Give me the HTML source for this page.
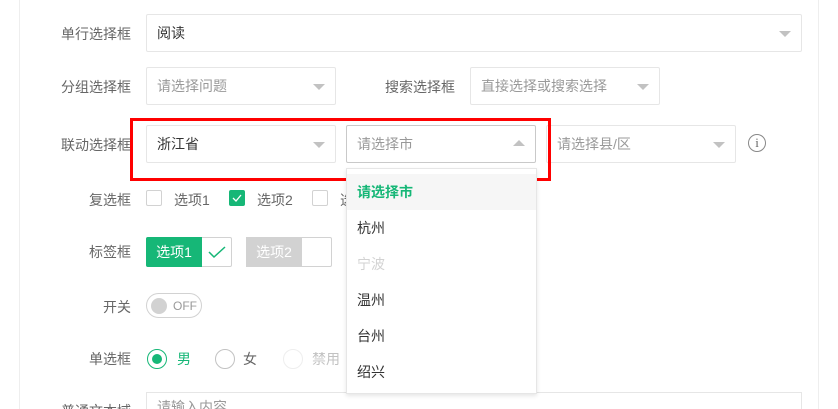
<!DOCTYPE html>
<html style="width:838px;height:409px;overflow:hidden"><head><meta charset="utf-8"><style>
*{box-sizing:border-box;margin:0;padding:0}
body{width:838px;height:409px;overflow:hidden;background:#fff;font-family:"Liberation Sans","Noto Sans CJK SC",sans-serif;font-size:14px;color:#333;position:relative}
.a{position:absolute}
.lbl{position:absolute;text-align:right;color:#666;width:120px;left:11px}
.sel{position:absolute;height:38px;border:1px solid #e6e6e6;border-radius:2px;background:#fff;padding-left:10px;line-height:36px;color:#333}
.ph{color:#999}
.arr{position:absolute;right:10px;top:16px;width:0;height:0;border-left:6px solid transparent;border-right:6px solid transparent;border-top:6px solid #c2c2c2}
.up{border-top:none;border-bottom:6px solid #c2c2c2;top:14px}
.cb{position:absolute;width:16px;height:16px;border:1px solid #d2d2d2;border-radius:2px;background:#fff}
.dd div{height:36px;line-height:36px;padding-left:10px}
</style></head><body>
<div class="a" style="left:19px;top:0;width:1px;height:409px;background:#eee"></div>
<div class="a" style="left:818px;top:0;width:1px;height:409px;background:#eee"></div>

<div class="lbl" style="top:24px">单行选择框</div>
<div class="sel" style="left:146px;top:14px;width:656px">阅读<span class="arr"></span></div>

<div class="lbl" style="top:77px">分组选择框</div>
<div class="sel ph" style="left:146px;top:67px;width:190px">请选择问题<span class="arr"></span></div>
<div class="lbl" style="top:77px;left:335px">搜索选择框</div>
<div class="sel ph" style="left:470px;top:67px;width:190px">直接选择或搜索选择<span class="arr"></span></div>

<div class="lbl" style="top:135px">联动选择框</div>
<div class="sel" style="left:146px;top:125px;width:190px">浙江省<span class="arr"></span></div>
<div class="sel ph" style="left:346px;top:125px;width:190px;border-color:#c9c9c9">请选择市<span class="arr up"></span></div>
<div class="sel ph" style="left:546px;top:125px;width:190px">请选择县/区<span class="arr"></span></div>
<div class="a" style="left:748px;top:134px;width:18px;height:18px;border:1px solid #888;border-radius:50%;text-align:center;line-height:16px;font-size:13px;color:#666;font-family:'Liberation Serif',serif">i</div>
<div class="a" style="left:130px;top:118px;width:421px;height:63px;border:3px solid #f00"></div>

<div class="lbl" style="top:190px">复选框</div>
<div class="cb" style="left:146px;top:190px"></div><div class="a" style="left:174px;top:190px;color:#666">选项1</div>
<div class="cb" style="left:229px;top:190px;background:#16b777;border-color:#16b777"><svg width="14" height="14" style="position:absolute;left:0;top:0"><path d="M3 7l3 3 5-6" stroke="#fff" stroke-width="1.3" fill="none"/></svg></div><div class="a" style="left:257px;top:190px;color:#666">选项2</div>
<div class="cb" style="left:312px;top:190px"></div><div class="a" style="left:340px;top:190px;color:#666">选项3</div>

<div class="lbl" style="top:242px">标签框</div>
<div class="a" style="left:146px;top:237px;width:86px;height:30px;border:1px solid #d2d2d2;border-radius:2px"></div>
<div class="a" style="left:146px;top:237px;width:56px;height:30px;background:#16b777;color:#fff;line-height:30px;text-align:center;border-radius:2px 0 0 2px">选项1</div>
<svg class="a" style="left:207px;top:244px" width="20" height="16"><path d="M2 8l5 5 11-10" stroke="#16b777" stroke-width="1.5" fill="none"/></svg>
<div class="a" style="left:246px;top:237px;width:86px;height:30px;border:1px solid #d2d2d2;border-radius:2px"></div>
<div class="a" style="left:246px;top:237px;width:56px;height:30px;background:#d2d2d2;color:#fff;line-height:30px;text-align:center">选项2</div>

<div class="lbl" style="top:297px">开关</div>
<div class="a" style="left:146px;top:293px;width:56px;height:25px;border:1px solid #d2d2d2;border-radius:13px"></div>
<div class="a" style="left:151px;top:298px;width:16px;height:16px;border-radius:50%;background:#d2d2d2"></div>
<div class="a" style="left:173px;top:299px;font-size:12px;color:#999">OFF</div>

<div class="lbl" style="top:349px">单选框</div>
<div class="a" style="left:147px;top:349px;width:20px;height:20px;border:1.5px solid #16b777;border-radius:50%"></div>
<div class="a" style="left:152px;top:354px;width:10px;height:10px;background:#16b777;border-radius:50%"></div>
<div class="a" style="left:177px;top:349px;color:#16b777">男</div>
<div class="a" style="left:215px;top:349px;width:20px;height:20px;border:1.5px solid #c2c2c2;border-radius:50%"></div>
<div class="a" style="left:243px;top:349px;color:#666">女</div>
<div class="a" style="left:283px;top:349px;width:20px;height:20px;border:1.5px solid #eee;border-radius:50%"></div>
<div class="a" style="left:312px;top:349px;color:#c2c2c2">禁用</div>

<div class="lbl" style="top:401px">普通文本域</div>
<div class="a" style="left:146px;top:392px;width:656px;height:17px;border:1px solid #e6e6e6;border-bottom:none;padding:4px 10px 0;color:#999;overflow:hidden">请输入内容</div>

<div class="a dd" style="left:346px;top:168px;width:191px;height:226px;background:#fff;border:1px solid #e6e6e6;box-shadow:0 2px 4px rgba(0,0,0,.1);padding-top:5px">
<div style="background:#f6f6f6;color:#16b777;font-weight:bold">请选择市</div>
<div>杭州</div>
<div style="color:#d2d2d2">宁波</div>
<div>温州</div>
<div>台州</div>
<div>绍兴</div>
</div>
</body></html>
